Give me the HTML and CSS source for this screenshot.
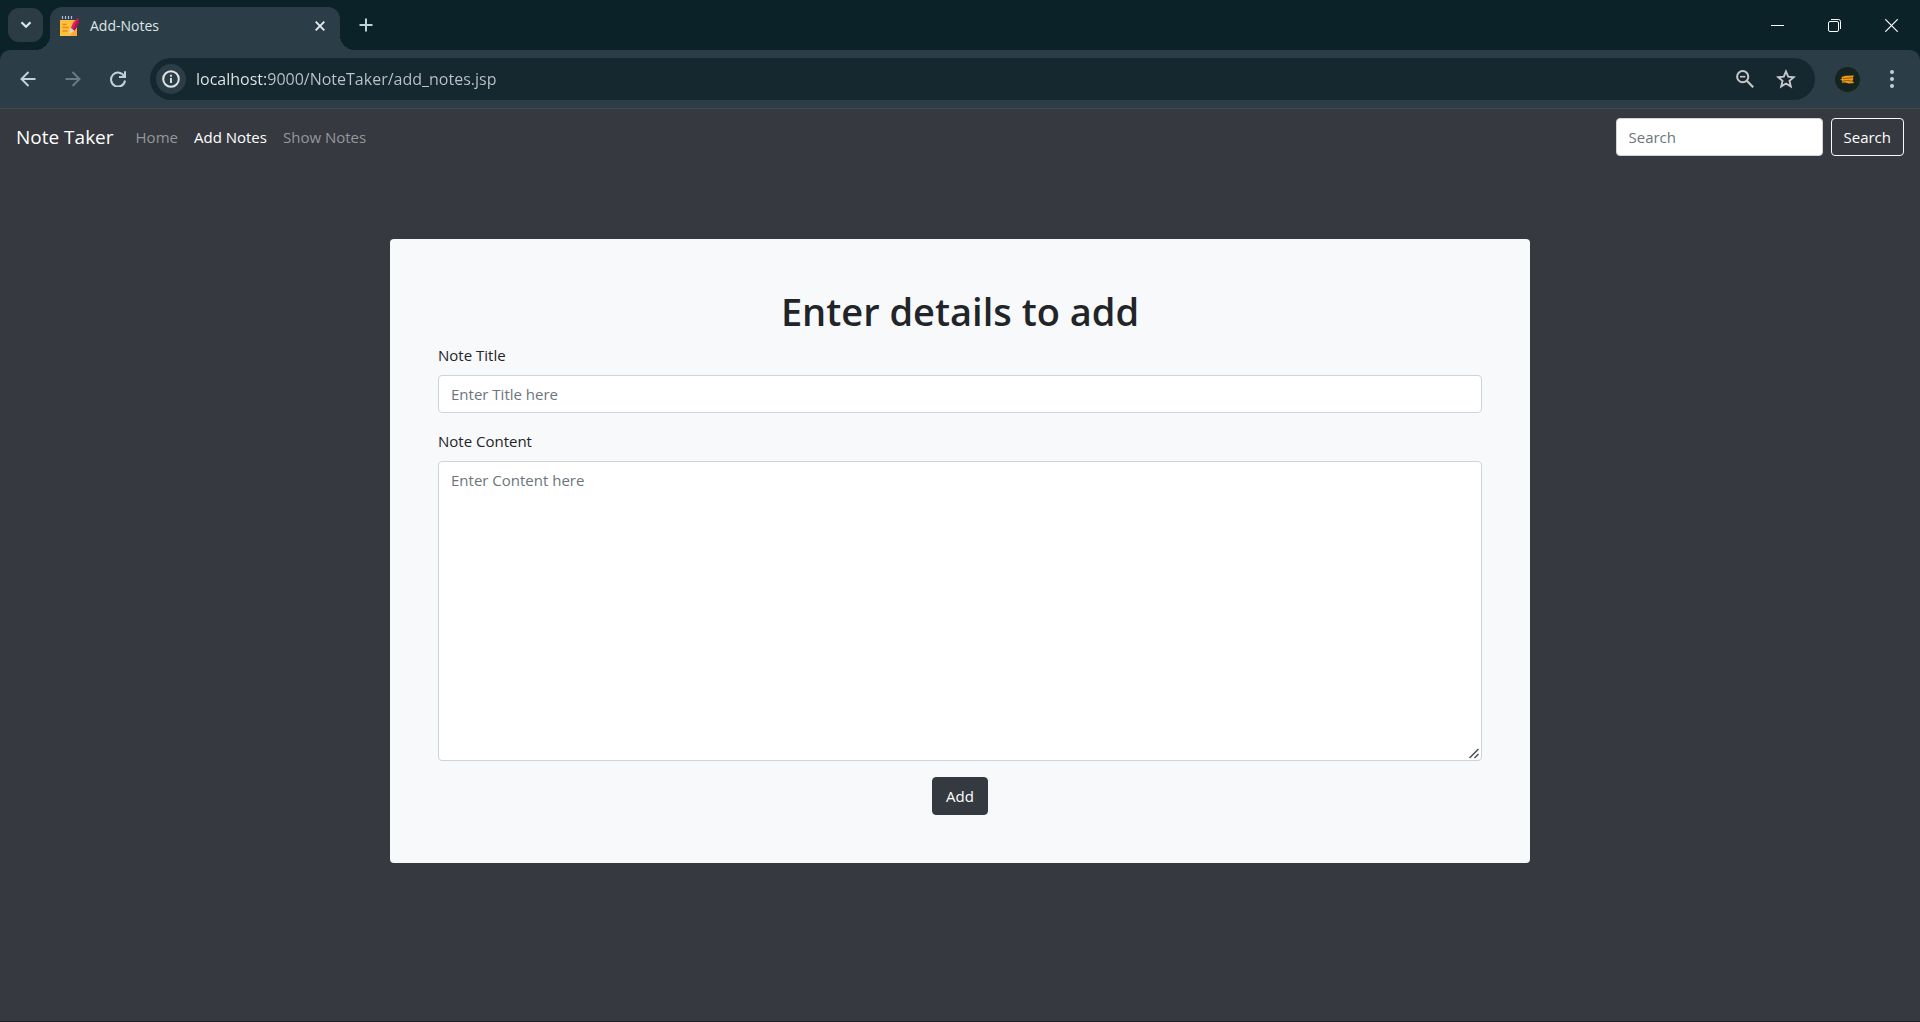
FILE: index.html
```html
<!DOCTYPE html>
<html lang="en">
<head>
<meta charset="utf-8">
<meta name="viewport" content="width=device-width, initial-scale=1">
<title>Add-Notes</title>
<link rel="stylesheet" href="styles.css">
</head>
<body>
<header class="browser">
  <div class="tabstrip">
    <button class="tab-search" aria-label="Search tabs">
      <svg width="12" height="8" viewBox="0 0 12 8"><path d="M1.5 1.2 6 5.7l4.500-4.500" fill="none" stroke="currentColor" stroke-width="2.200"/></svg>
    </button>
    <div class="tab">
      <svg width="20" height="22" viewBox="0 0 20 22">
        <rect x="0" y="2" width="16" height="4" fill="#2c3a55"/>
        <path d="M2.500 1v3M5.500 1v3M8.500 1v3M11.500 1v3" stroke="#b4bccb" stroke-width="1.200"/>
        <path d="M0 5h17v16H0z" fill="#ffc03c"/>
        <path d="M13 5h4v16h-6z" fill="#ffa92e"/>
        <path d="M2.500 9.500h4M2.500 12.500h6M2.500 16h5" stroke="#e08a1c" stroke-width="1.300"/>
        <path d="m9.500 19 1-6 4 2.500z" fill="#c9dcf2"/>
        <path d="M11 13C12 9 15 4.500 18.500 3 19.500 7 17.500 12 14.500 15.500z" fill="#e0215d"/>
        <path d="M18.500 3C19.500 7 17.500 12 14.500 15.500l-1.500-1z" fill="#b0124a"/>
      </svg>
      <span class="tab-title">Add-Notes</span>
      <button class="tab-close" aria-label="Close tab">
        <svg width="10" height="10" viewBox="0 0 10 10"><path d="m.7.700 8.600 8.600M9.300.700.700 9.300" stroke="currentColor" stroke-width="1.900"/></svg>
      </button>
    </div>
    <button class="new-tab" aria-label="New tab">
      <svg width="14" height="14" viewBox="0 0 14 14"><path d="M7 .500v13M.500 7h13" stroke="currentColor" stroke-width="2"/></svg>
    </button>
    <div class="window-controls">
      <button aria-label="Minimize"><svg width="13" height="13" viewBox="0 0 13 13"><path d="M0 6.500h13" stroke="currentColor"/></svg></button>
      <button aria-label="Restore"><svg width="13" height="13" viewBox="0 0 13 13"><rect x=".5" y="2.500" width="10" height="10" rx="1.500" fill="none" stroke="currentColor"/><path d="M3 .500h7.500a2 2 0 0 1 2 2V10" fill="none" stroke="currentColor"/></svg></button>
      <button aria-label="Close"><svg width="13" height="13" viewBox="0 0 13 13"><path d="m.3.300 12.400 12.400M12.700.300.300 12.700" stroke="currentColor" stroke-width="1.200"/></svg></button>
    </div>
  </div>
  <div class="toolbar">
    <div class="nav-buttons">
      <button aria-label="Back"><svg width="16" height="16" viewBox="0 0 16 16"><path d="M15.500 8H2M8.500 1 1.500 8l7 7" fill="none" stroke="currentColor" stroke-width="2"/></svg></button>
      <button class="muted" aria-label="Forward"><svg width="16" height="16" viewBox="0 0 16 16"><path d="M.500 8H14M7.500 1l7 7-7 7" fill="none" stroke="currentColor" stroke-width="2"/></svg></button>
      <button aria-label="Reload"><svg width="16" height="16" viewBox="0 0 16 16"><path d="M14.300 5.400A7 7 0 1 0 15 9.500" fill="none" stroke="currentColor" stroke-width="2"/><path d="M15 .200V6H9" fill="none" stroke="currentColor" stroke-width="2"/></svg></button>
    </div>
    <div class="omnibox">
      <button class="site-info" aria-label="Site information">
        <svg width="18" height="18" viewBox="0 0 18 18"><circle cx="9" cy="9" r="7.800" fill="none" stroke="currentColor" stroke-width="2"/><path d="M9 8v5M9 4.800v2" stroke="currentColor" stroke-width="1.900"/></svg>
      </button>
      <input class="url" type="text" aria-label="Address" value="localhost:9000/NoteTaker/add_notes.jsp">
      <button class="omni-icon" aria-label="Zoom">
        <svg width="18" height="18" viewBox="0 0 18 18"><circle cx="6.700" cy="6.700" r="5.600" fill="none" stroke="currentColor" stroke-width="2"/><path d="M4 6.700h5.400" stroke="currentColor" stroke-width="1.600"/><path d="m10.800 10.800 6.400 6.400" stroke="currentColor" stroke-width="2.200"/></svg>
      </button>
      <button class="omni-icon" aria-label="Bookmark">
        <svg width="20" height="20" viewBox="0 0 20 20"><path d="m10 2.500 2.200 5.200 5.600.500-4.300 3.700 1.300 5.500L10 14.500l-4.800 2.900 1.300-5.500L2.200 8.200l5.600-.500z" fill="none" stroke="currentColor" stroke-width="1.900"/></svg>
      </button>
    </div>
    <button class="avatar" aria-label="Profile">
      <svg width="25" height="25" viewBox="0 0 25 25"><circle cx="12.500" cy="12.500" r="12.500" fill="#152421"/><path d="m6.500 10 4-1.200 8.500-.3-1.500 2.500 1 1-1 1.500 1.500 2.500-5 .5-4-1-3.500.200 1.200-1.700L5 12.500l2-.5z" fill="#f29a12"/><path d="m8 11.500 9-.7M8 14l5-.5 5 .8" stroke="#7a4a0a" stroke-width=".8" fill="none"/></svg>
    </button>
    <button class="menu" aria-label="Menu">
      <svg width="4" height="18" viewBox="0 0 4 18"><g fill="currentColor"><circle cx="2" cy="2" r="2"/><circle cx="2" cy="9" r="2"/><circle cx="2" cy="16" r="2"/></g></svg>
    </button>
  </div>
</header>

<nav class="navbar">
  <a class="brand" href="#">Note Taker</a>
  <ul class="nav-links">
    <li><a href="#">Home</a></li>
    <li><a class="active" href="#">Add Notes</a></li>
    <li><a href="#">Show Notes</a></li>
  </ul>
  <form class="search">
    <input class="control" type="search" placeholder="Search" aria-label="Search">
    <button class="btn btn-outline" type="button">Search</button>
  </form>
</nav>

<main class="card">
  <h1>Enter details to add</h1>
  <form>
    <div class="group">
      <label for="title">Note Title</label>
      <input class="control" id="title" type="text" placeholder="Enter Title here">
    </div>
    <div class="group">
      <label for="content">Note Content</label>
      <textarea class="control" id="content" placeholder="Enter Content here"></textarea>
    </div>
    <div class="actions">
      <button class="btn btn-dark" type="button">Add</button>
    </div>
  </form>
</main>
</body>
</html>
```
FILE: styles.css
```css
*, *::before, *::after {
  box-sizing: border-box;
}

html {
  background: #343a40;
}

body {
  margin: 0;
  min-height: 100vh;
  background: #363940;
  border-bottom: 1px solid #202225;
  color: #212529;
  font-family: "Open Sans", "Noto Sans", sans-serif;
  font-size: 15px;
  line-height: 24px;
}

button, input, textarea {
  margin: 0;
  font: inherit;
}

svg {
  display: block;
  flex: none;
}

/* Browser frame */
.browser {
  background: #0b2229;
}

.browser button {
  display: flex;
  align-items: center;
  justify-content: center;
  flex: none;
  padding: 0;
  border: 0;
  background: none;
  color: #bdd3dc;
}

.tabstrip {
  display: flex;
  align-items: flex-end;
  height: 50px;
  padding-left: 8px;
}

.browser .tab-search {
  width: 35px;
  height: 34px;
  margin: 0 7px 8px 0;
  border-radius: 11px;
  background: #2b3c45;
  color: #dfe7ea;
}

.tab {
  position: relative;
  display: flex;
  align-items: center;
  gap: 10px;
  width: 290px;
  height: 43px;
  padding: 0 10px;
  padding-bottom: 6px;
  border-radius: 12px 12px 0 0;
  background: #2b3d46;
}

.tab::before,
.tab::after {
  content: "";
  position: absolute;
  bottom: 0;
  width: 15px;
  height: 15px;
}

.tab::before {
  right: 100%;
  background: radial-gradient(circle at 0 0, transparent 15px, #2b3d46 15px);
}

.tab::after {
  left: 100%;
  background: radial-gradient(circle at 100% 0, transparent 15px, #2b3d46 15px);
}

.tab-title {
  flex: 1;
  color: #dfe5e8;
  font-size: 14px;
  line-height: 20px;
}

.browser .tab-close {
  width: 20px;
  height: 20px;
  color: #e6ebed;
}

.browser .new-tab {
  width: 52px;
  height: 50px;
}

.window-controls {
  display: flex;
  margin-left: auto;
}

.browser .window-controls button {
  width: 57px;
  height: 50px;
  color: #fff;
}

.toolbar {
  display: flex;
  align-items: center;
  height: 59px;
  padding: 0 8px 0 5px;
  border-bottom: 1px solid #454a4d;
  border-radius: 10px 10px 0 0;
  background: #2b3d46;
}

.nav-buttons {
  display: flex;
}

.nav-buttons button {
  width: 45px;
  height: 40px;
}

.browser .muted {
  color: #6b7b83;
}

.omnibox {
  display: flex;
  align-items: center;
  flex: 1;
  height: 42px;
  margin: 0 20px 0 10px;
  padding: 0 9px 0 6px;
  border-radius: 21px;
  background: #152830;
}

.browser .site-info {
  width: 30px;
  height: 30px;
  border-radius: 50%;
  background: #2b3d46;
  color: #e3e3e3;
}

/* The host name is brighter than the rest of the address */
.url {
  flex: 1;
  min-width: 0;
  height: 30px;
  padding: 0 0 0 10px;
  border: 0;
  outline: 0;
  background: linear-gradient(to right, #e6eaec 80px, #bcc5c9 80px);
  background-clip: text;
  color: transparent;
  caret-color: #fff;
  font-size: 16px;
}

.browser .omni-icon {
  width: 41px;
  height: 36px;
  color: #c7c7c7;
}

.browser .avatar {
  width: 25px;
}

.browser .menu {
  width: 40px;
  height: 40px;
  margin-left: 12px;
}

/* Site navigation */
.navbar {
  display: flex;
  align-items: center;
  padding: 8px 16px;
}

.navbar a {
  color: #95979a;
  text-decoration: none;
}

.navbar .brand {
  margin-right: 14px;
  color: #fff;
  font-size: 19px;
  line-height: 30px;
}

.nav-links {
  display: flex;
  flex: 1;
  margin: 0;
  padding: 0;
  list-style: none;
}

.nav-links a {
  display: block;
  padding: 8px;
}

.nav-links .active {
  color: #fff;
}

.search {
  display: flex;
  gap: 8px;
}

.search .control {
  width: 207px;
  appearance: none;
}

/* Form controls */
.control {
  display: block;
  width: 100%;
  height: 38px;
  padding: 6px 12px;
  border: 1px solid #ced4da;
  border-radius: 4px;
  background: #fff;
  color: #495057;
}

.control::placeholder {
  color: #6c757d;
}

textarea.control {
  height: 300px;
  resize: vertical;
}

textarea.control::-webkit-resizer {
  background: url("data:image/svg+xml,%3Csvg xmlns='http://www.w3.org/2000/svg' width='15' height='15'%3E%3Cpath d='M3.500 13l9-9M8.500 13l4-4' stroke='%23555' stroke-width='1.600'/%3E%3C/svg%3E") no-repeat right bottom;
}

.btn {
  min-width: 56px;
  padding: 6px 12px;
  border: 1px solid;
  border-radius: 4px;
  color: #fff;
}

.btn-outline {
  border-color: #f8f9fa;
  background: transparent;
}

.btn-dark {
  border-color: #343a40;
  background: #343a40;
}

/* Note form */
.card {
  max-width: 1140px;
  margin: 74px auto 0;
  padding: 48px;
  border-radius: 4px;
  background: #f8f9fa;
}

.card h1 {
  margin: 0 0 8px;
  font-size: 38px;
  font-weight: 600;
  line-height: 48px;
  text-align: center;
}

.group {
  margin-bottom: 16px;
}

.group label {
  display: block;
  margin-bottom: 8px;
}

.actions {
  display: flex;
  justify-content: center;
}
```
